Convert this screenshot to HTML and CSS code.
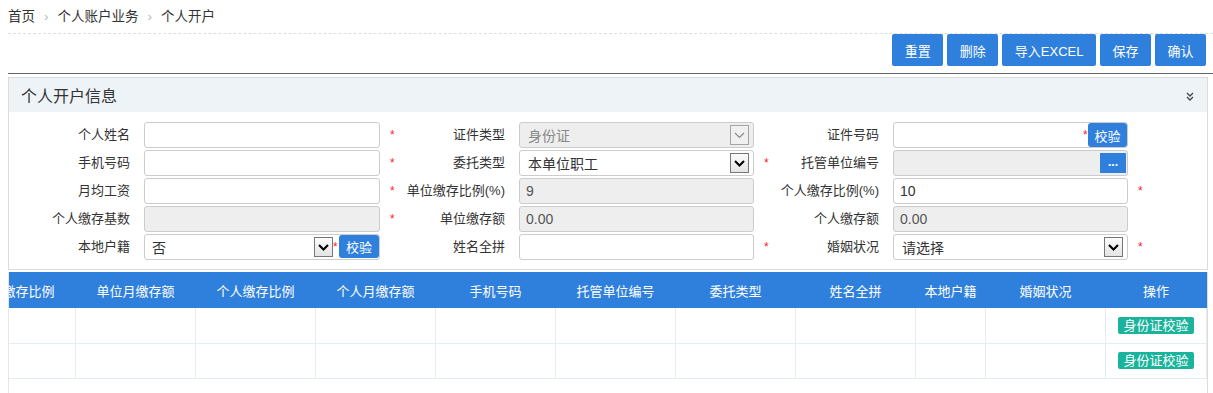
FILE: index.html
```html
<!DOCTYPE html>
<html lang="zh-CN">
<head>
<meta charset="utf-8">
<title>个人开户</title>
<link rel="stylesheet" href="styles.css">
</head>
<body>
<div class="page">
  <div class="crumb">
    <span>首页</span><span class="sep">›</span><span>个人账户业务</span><span class="sep">›</span><span>个人开户</span>
  </div>
  <div class="toolbar">
    <button class="btn">重置</button>
    <button class="btn">删除</button>
    <button class="btn">导入EXCEL</button>
    <button class="btn">保存</button>
    <button class="btn">确认</button>
  </div>

  <div class="panel">
    <div class="panel-head">
      <span class="panel-title">个人开户信息</span>
      <svg class="collapse" width="8" height="9" viewBox="0 0 8 9"><path d="M1 1l3 3 3-3M1 5l3 3 3-3" fill="none" stroke="#444" stroke-width="1.3"/></svg>
    </div>
    <div class="form">
      <!-- row 1 -->
      <div class="lbl">个人姓名</div>
      <input class="inp" type="text">
      <div class="star">*</div>
      <div class="lbl">证件类型</div>
      <div class="sel sel-off"><span>身份证</span><span class="arrow arrow-off"><svg width="11" height="7" viewBox="0 0 11 7"><path d="M1 1l4.5 4.5L10 1" fill="none" stroke="#8a8a8a" stroke-width="1.2"/></svg></span></div>
      <div class="star"></div>
      <div class="lbl">证件号码</div>
      <div class="inp-btn"><span class="fill"></span><span class="star-in">*</span><span class="mini-btn check">校验</span></div>
      <div class="star"></div>

      <!-- row 2 -->
      <div class="lbl">手机号码</div>
      <input class="inp" type="text">
      <div class="star">*</div>
      <div class="lbl">委托类型</div>
      <div class="sel"><span>本单位职工</span><span class="arrow"><svg width="11" height="7" viewBox="0 0 11 7"><path d="M1 1l4.5 4.5L10 1" fill="none" stroke="#000" stroke-width="2"/></svg></span></div>
      <div class="star">*</div>
      <div class="lbl">托管单位编号</div>
      <div class="inp-btn off"><span class="fill"></span><span class="mini-btn dots">...</span></div>
      <div class="star"></div>

      <!-- row 3 -->
      <div class="lbl">月均工资</div>
      <input class="inp" type="text">
      <div class="star">*</div>
      <div class="lbl">单位缴存比例(%)</div>
      <input class="inp" type="text" value="9" disabled>
      <div class="star"></div>
      <div class="lbl">个人缴存比例(%)</div>
      <input class="inp" type="text" value="10">
      <div class="star">*</div>

      <!-- row 4 -->
      <div class="lbl">个人缴存基数</div>
      <input class="inp" type="text" disabled>
      <div class="star">*</div>
      <div class="lbl">单位缴存额</div>
      <input class="inp" type="text" value="0.00" disabled>
      <div class="star"></div>
      <div class="lbl">个人缴存额</div>
      <input class="inp" type="text" value="0.00" disabled>
      <div class="star"></div>

      <!-- row 5 -->
      <div class="lbl">本地户籍</div>
      <div class="combo">
        <div class="sel-inline"><span>否</span><span class="arrow"><svg width="11" height="7" viewBox="0 0 11 7"><path d="M1 1l4.5 4.5L10 1" fill="none" stroke="#000" stroke-width="2"/></svg></span></div>
        <span class="star-in">*</span>
        <span class="mini-btn check2">校验</span>
      </div>
      <div class="star"></div>
      <div class="lbl">姓名全拼</div>
      <input class="inp" type="text">
      <div class="star">*</div>
      <div class="lbl">婚姻状况</div>
      <div class="sel"><span>请选择</span><span class="arrow"><svg width="11" height="7" viewBox="0 0 11 7"><path d="M1 1l4.5 4.5L10 1" fill="none" stroke="#000" stroke-width="2"/></svg></span></div>
      <div class="star">*</div>
    </div>
  </div>

  <div class="grid-wrap">
    <table class="grid">
      <colgroup>
        <col class="w120"><col class="w120"><col class="w120"><col class="w120"><col class="w120"><col class="w120"><col class="w120"><col class="w120"><col class="w70"><col class="w120"><col class="w101">
      </colgroup>
      <thead>
        <tr><th>单位缴存比例</th><th>单位月缴存额</th><th>个人缴存比例</th><th>个人月缴存额</th><th>手机号码</th><th>托管单位编号</th><th>委托类型</th><th>姓名全拼</th><th>本地户籍</th><th>婚姻状况</th><th>操作</th></tr>
      </thead>
      <tbody>
        <tr><td></td><td></td><td></td><td></td><td></td><td></td><td></td><td></td><td></td><td></td><td><span class="badge">身份证校验</span></td></tr>
        <tr><td></td><td></td><td></td><td></td><td></td><td></td><td></td><td></td><td></td><td></td><td><span class="badge">身份证校验</span></td></tr>
      </tbody>
    </table>
  </div>
</div>
</body>
</html>
```

FILE: styles.css
```css
* { box-sizing: border-box; }
html, body { margin: 0; background: #fff; }
body {
  font-family: "Liberation Sans", "Noto Sans CJK SC", sans-serif;
  font-size: 13px;
  color: #333;
}
.page { padding-left: 8px; }

/* breadcrumb */
.crumb {
  height: 34px;
  line-height: 33px;
  border-bottom: 1px dashed #dedede;
  display: flex;
  align-items: center;
  white-space: nowrap;
  font-size: 13.5px;
}
.crumb .sep { color: #bbb; margin: 0 9px; }

/* toolbar */
.toolbar {
  display: flex;
  justify-content: flex-end;
  gap: 4px;
  padding: 0 7px 7px 0;
  border-bottom: 1px solid #666;
}
.btn {
  height: 32px;
  padding: 0 12.5px;
  border: none;
  border-radius: 2px;
  background: #2f80dc;
  color: #fff;
  font-family: "Liberation Sans", "Noto Sans CJK SC", sans-serif;
  font-size: 13px;
}

/* panel */
.panel {
  width: 1200px;
  margin-top: 3px;
  border: 1px solid #dcdcdc;
}
.panel-head {
  height: 34px;
  background: #eef3f8;
  display: flex;
  align-items: center;
  justify-content: space-between;
  padding: 0 13px 0 12px;
}
.panel-title { font-size: 16px; color: #333; }
.collapse { margin-top: 2px; }

.form {
  display: grid;
  grid-template-columns: 135px 236px 22px 117px 235px 22px 117px 235px 22px;
  grid-auto-rows: 26px;
  row-gap: 2px;
  padding: 10px 0 9px 0;
}
.lbl {
  text-align: right;
  padding-right: 14px;
  line-height: 26px;
  white-space: nowrap;
  color: #333;
}
.star {
  color: #f22;
  font-size: 12px;
  line-height: 26px;
  padding-left: 10px;
}
.inp {
  width: 100%;
  height: 26px;
  border: 1px solid #ccc;
  border-radius: 3px;
  padding: 0 6px;
  font-family: "Liberation Sans", "Noto Sans CJK SC", sans-serif;
  font-size: 14px;
  color: #333;
  background: #fff;
  outline: none;
}
.inp:disabled { background: #eee; color: #555; }

.sel {
  height: 26px;
  border: 1px solid #ccc;
  border-radius: 3px;
  display: flex;
  align-items: center;
  justify-content: space-between;
  padding: 0 4px 0 8px;
  font-size: 14px;
  color: #333;
  background: #fff;
}
.sel-off { background: #eee; color: #888; }
.arrow {
  width: 19px;
  height: 20px;
  border: 1px solid #777;
  background: linear-gradient(#fbfbfb, #e4e4e4);
  display: flex;
  align-items: center;
  justify-content: center;
}
.arrow-off { border-color: #a5a5a5; background: #f0f0f0; }

.inp-btn {
  height: 26px;
  border: 1px solid #ccc;
  border-radius: 3px;
  display: flex;
  align-items: center;
  background: #fff;
}
.inp-btn.off { background: #eee; }
.fill { flex: 1; }
.star-in { color: #f22; font-size: 12px; width: 5px; overflow: hidden; }
.mini-btn {
  background: #2f80dc;
  color: #fff;
  display: flex;
  align-items: center;
  justify-content: center;
  border-radius: 3px;
}
.check { width: 39px; height: 24px; font-size: 13px; }
.dots {
  width: 26px;
  height: 20px;
  font-weight: bold;
  font-size: 12px;
  line-height: 14px;
  margin-right: 1px;
  border-radius: 0;
  padding-bottom: 3px;
}

.combo {
  height: 26px;
  border: 1px solid #ccc;
  border-radius: 3px;
  display: flex;
  align-items: flex-start;
  background: #fff;
}
.sel-inline {
  flex: 1;
  height: 24px;
  display: flex;
  align-items: center;
  justify-content: space-between;
  padding-left: 7px;
  font-size: 14px;
  color: #333;
}
.combo .star-in { width: 6px; line-height: 24px; }
.check2 { width: 40px; height: 23px; font-size: 13px; }

/* table */
.grid-wrap {
  width: 1200px;
  margin-top: 2px;
  height: 121px;
  overflow: hidden;
  border-left: 1px solid #e4e8ea;
  border-right: 1px solid #dcdcdc;
}
.grid {
  border-collapse: collapse;
  table-layout: fixed;
  width: 1251px;
  margin-left: -54px;
}
.w120 { width: 120px; }
.w70 { width: 70px; }
.w101 { width: 101px; }
.grid th {
  height: 36px;
  background: #2f80dc;
  color: #fff;
  font-weight: normal;
  font-size: 13px;
  text-align: center;
  padding: 0;
  white-space: nowrap;
  overflow: hidden;
}
.grid td {
  height: 35px;
  border: 1px solid #e2eef2;
  border-top: none;
  padding: 0;
  text-align: center;
}
.badge {
  display: inline-block;
  background: #1ab39c;
  color: #fff;
  font-size: 13px;
  line-height: 17px;
  padding: 0 5px;
  border-radius: 2px;
}
```
